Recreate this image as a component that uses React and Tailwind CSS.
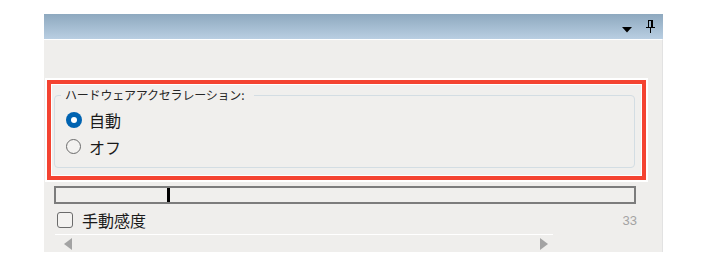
import React from "react";

const JP = { fontFamily: '"Noto Sans CJK JP", "Noto Sans", sans-serif' };

function Pin() {
  return (
    <svg width="9" height="13" viewBox="0 0 9 13" className="block">
      <rect x="2" y="0" width="5" height="1" fill="#000" />
      <rect x="2" y="1" width="1" height="6" fill="#000" />
      <rect x="5" y="1" width="2" height="6" fill="#000" />
      <rect x="0" y="7" width="9" height="1" fill="#000" />
      <rect x="4" y="8" width="1" height="5" fill="#000" />
    </svg>
  );
}

function Radio({ checked }) {
  if (checked) {
    return (
      <span className="flex h-[16px] w-[16px] items-center justify-center rounded-full bg-[#0063b1]">
        <span className="h-[6px] w-[6px] rounded-full bg-white" />
      </span>
    );
  }
  return <span className="block h-[15px] w-[15px] rounded-full border border-[#6b6b6b] bg-[#f3f2f0]" />;
}

export default function App() {
  return (
    <div className="h-[265px] w-[708px] bg-white pl-[44px] pt-[14px]" style={JP}>
      <div className="flex w-[619px] flex-col">
        {/* header */}
        <div className="flex h-[25px] items-center justify-end gap-[14px] bg-gradient-to-b from-[#8ea9bf] to-[#b9cee2] pr-[8px]">
          <svg width="10" height="6" viewBox="0 0 10 6" className="mt-[6px] block">
            <polygon points="0,0 10,0 5,5.5" fill="#000" />
          </svg>
          <Pin />
        </div>
        {/* body */}
        <div className="flex h-[213px] flex-col border-t border-t-white border-r border-r-[#e2e2e2] bg-[#efeeec] pt-[38px]">
          {/* highlighted group */}
          <div className="ml-px w-[603px] bg-white p-[2px]">
            <div className="border-4 border-[#f44331]">
              <div className="bg-white p-px">
                <div className="bg-[#f0efed] pb-[7px] pl-[2px] pr-[6px] pt-[2px]">
                  <fieldset className="rounded-[4px] border border-[#d3dde3] pb-[7px] pt-[3px]">
                    <legend className="ml-[6px] px-[4px] pr-[10px] text-[12px] leading-[16px] tracking-[-0.2px] text-[#262626]">
                      ハードウェアアクセラレーション:
                    </legend>
                    <div className="pl-[11px]">
                      <div className="flex h-[27px] items-center gap-[7px]">
                        <Radio checked />
                        <span className="text-[16px] leading-none text-[#1a1a1a]">自動</span>
                      </div>
                      <div className="flex h-[27px] items-center gap-[8px]">
                        <Radio />
                        <span className="text-[16px] leading-none text-[#1a1a1a]">オフ</span>
                      </div>
                    </div>
                  </fieldset>
                </div>
              </div>
            </div>
          </div>
          {/* slider track */}
          <div className="ml-[10px] mt-[4px] flex h-[18px] w-[582px] border-2 border-[#7c7c7c] bg-[#f0efed] pl-[111px]">
            <div className="h-full w-[3px] bg-black" />
          </div>
          {/* checkbox row */}
          <div className="ml-[13px] mt-[8px] flex h-[16px] w-[580px] items-center">
            <span className="block h-[16px] w-[16px] rounded-[3px] border border-[#6b6b6b] bg-[#f3f2f0]" />
            <span className="ml-[9px] text-[16px] leading-none text-[#1a1a1a]">手動感度</span>
            <span className="ml-auto text-[13px] leading-none text-[#a3a3a3]" style={{ fontFamily: '"Liberation Sans", sans-serif' }}>33</span>
          </div>
          {/* scrollbar */}
          <div className="ml-[11px] mt-[6px] h-px w-[498px] bg-white" />
          <div className="ml-[20px] mt-[3px] flex w-[484px] items-center justify-between">
            <svg width="8" height="12" viewBox="0 0 8 12" className="block">
              <polygon points="8,0 8,12 0,6" fill="#a3a3a3" />
            </svg>
            <svg width="8" height="12" viewBox="0 0 8 12" className="block">
              <polygon points="0,0 0,12 8,6" fill="#a3a3a3" />
            </svg>
          </div>
        </div>
      </div>
    </div>
  );
}
